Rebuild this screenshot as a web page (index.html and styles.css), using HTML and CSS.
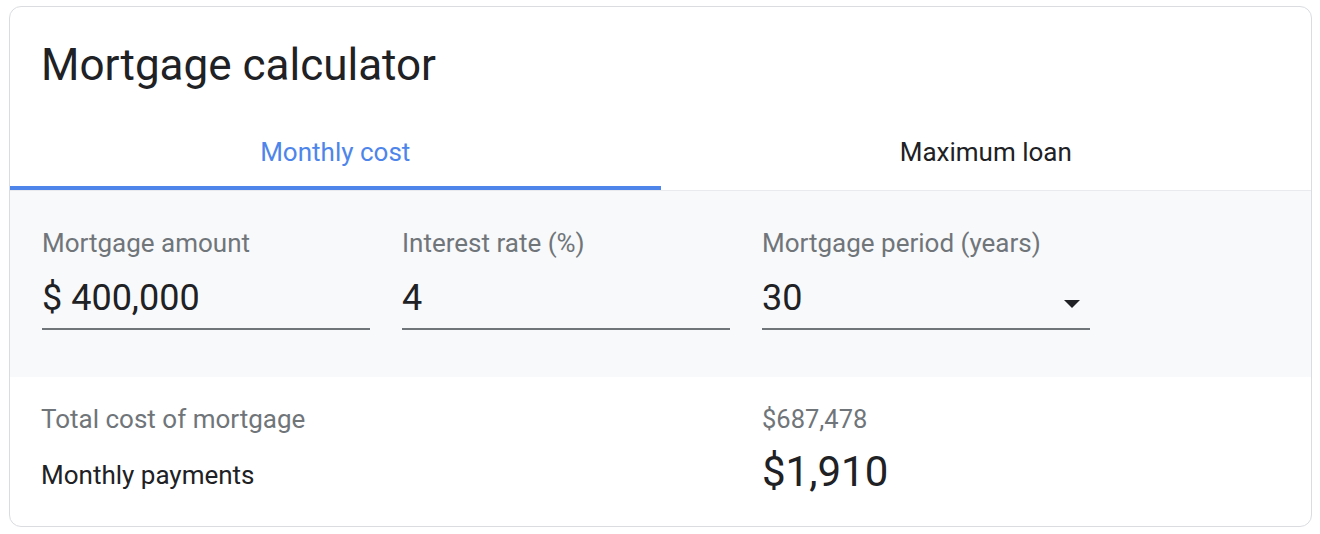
FILE: index.html
```html
<!DOCTYPE html>
<html lang="en">
<head>
<meta charset="utf-8">
<title>Mortgage calculator</title>
<link rel="stylesheet" href="styles.css">
</head>
<body>
<div class="card">
  <h1 class="title">Mortgage calculator</h1>
  <div class="tabs">
    <div class="tab tab-active">Monthly cost</div>
    <div class="tab">Maximum loan</div>
  </div>
  <div class="inputs">
    <div class="field">
      <div class="label">Mortgage amount</div>
      <div class="value-row"><span class="value">$ 400,000</span></div>
    </div>
    <div class="field">
      <div class="label">Interest rate (%)</div>
      <div class="value-row"><span class="value">4</span></div>
    </div>
    <div class="field">
      <div class="label">Mortgage period (years)</div>
      <div class="value-row select">
        <span class="value">30</span>
        <svg class="caret" width="16" height="8" viewBox="0 0 16 8"><path d="M0 0h16L8 8z" fill="#202124"/></svg>
      </div>
    </div>
  </div>
  <div class="results">
    <div class="row row-total">
      <span class="r-label muted">Total cost of mortgage</span>
      <span class="r-small muted">$687,478</span>
    </div>
    <div class="row row-monthly">
      <span class="r-label r-label-top">Monthly payments</span>
      <span class="r-big">$1,910</span>
    </div>
  </div>
</div>
</body>
</html>
```

FILE: styles.css
```css
* { box-sizing: border-box; }
html, body { margin: 0; background: #ffffff; }
body {
  padding: 6px 8px 0 9px;
  font-family: Roboto, "Liberation Sans", Arial, sans-serif;
  color: #202124;
}
.card {
  width: 1303px;
  height: 521px;
  border: 1px solid #dadce0;
  border-radius: 12px;
  overflow: hidden;
  background: #fff;
}
.title {
  margin: 0;
  padding: 32px 0 0 31px;
  font-size: 44px;
  line-height: 52px;
  font-weight: 400;
  color: #202124;
}
.tabs {
  display: flex;
  margin-top: 19px;
  border-bottom: 1px solid #e8eaed;
}
.tab {
  flex: 1;
  text-align: center;
  font-size: 26px;
  line-height: 28px;
  padding: 28px 0 20px;
  border-bottom: 4px solid transparent;
  color: #202124;
}
.tab-active {
  color: #4e85ea;
  border-bottom-color: #4e85ea;
}
.inputs {
  display: flex;
  gap: 32px;
  background: #f8f9fa;
  padding: 37px 0 47px 32px;
}
.field { width: 328px; }
.label {
  font-size: 26px;
  line-height: 30px;
  color: #70757a;
}
.value-row {
  display: flex;
  align-items: flex-start;
  justify-content: space-between;
  margin-top: 19px;
  padding-bottom: 9px;
  border-bottom: 2px solid #70757a;
}
.value {
  font-size: 36px;
  line-height: 42px;
  color: #202124;
}
.select { padding-right: 10px; }
.caret { margin-top: 23px; display: block; }
.results {
  padding: 27px 0 0 31px;
}
.row {
  display: grid;
  grid-template-columns: 721px 1fr;
  align-items: baseline;
}
.row-monthly { margin-top: 13px; }
.r-label {
  font-size: 26px;
  line-height: 30px;
}
.r-label-top {
  align-self: start;
  margin-top: 13px;
}
.muted { color: #70757a; }
.r-small {
  font-size: 25.5px;
  line-height: 30px;
}
.r-big {
  font-size: 42px;
  line-height: 50px;
  color: #202124;
}
```
